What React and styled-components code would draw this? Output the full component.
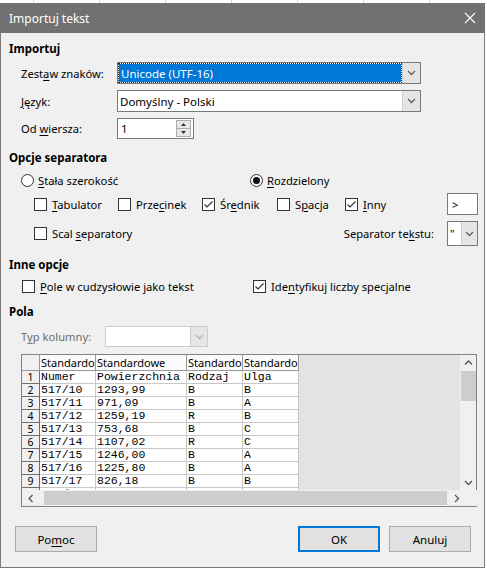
import React from 'react'
import styled, { createGlobalStyle } from 'styled-components'

const GlobalStyle = createGlobalStyle`
  html, body { margin: 0; padding: 0; background: #fff; }
  body {
    font-family: "Noto Sans", "Liberation Sans", sans-serif;
    font-size: 11.2px;
    color: #000;
  }
`

const Screen = styled.div`
  width: 487px;
  height: 568px;
  overflow: hidden;
  box-sizing: border-box;
  padding-top: 3px;
  background-color: #fff;
  background-image: linear-gradient(to right, #d4d4d4 1px, transparent 1px);
  background-size: 66px 100%;
  background-position: 33px 0;
`

const Window = styled.div`
  width: 485px;
  height: 565px;
  box-sizing: border-box;
  display: flex;
  flex-direction: column;
  background: #f0f0f0;
  border: 1px solid #7a7a7a;
  border-top: none;
`

const TitleBar = styled.div`
  flex: none;
  height: 30px;
  margin: 0 -1px;
  padding: 0 9px;
  background: #717171;
  color: #fff;
  display: flex;
  align-items: center;
  justify-content: space-between;
  font-size: 12px;
`

const Body = styled.div`
  flex: 1;
  display: flex;
  flex-direction: column;
  padding: 8px 6px 0 8px;
`

const Heading = styled.div`
  height: 16px;
  line-height: 16px;
  margin-top: ${p => p.$top || 0}px;
  font-weight: 700;
  font-size: 11.5px;
`

const Row = styled.div`
  display: flex;
  align-items: center;
  height: ${p => p.$h}px;
  margin-top: ${p => p.$top}px;
  padding-left: ${p => p.$indent}px;
`

const Label = styled.span`
  width: ${p => p.$w ? p.$w + 'px' : 'auto'};
  flex: none;
  white-space: nowrap;
  color: ${p => p.$disabled ? '#6d6d6d' : '#000'};
`

const U = styled.span`
  text-decoration: underline;
  text-underline-offset: 2px;
`

const Combo = styled.div`
  width: ${p => p.$w}px;
  height: ${p => p.$h}px;
  margin-left: ${p => p.$left || 0}px;
  box-sizing: border-box;
  display: flex;
  background: #fff;
  border: 1px solid ${p => p.$disabled ? '#cccccc' : '#7a7a7a'};
`

const ComboValue = styled.div`
  flex: 1;
  display: flex;
  align-items: center;
  padding-left: 2px;
  margin: ${p => p.$selected ? '1px' : '0'};
  background: ${p => p.$selected ? '#0078d7' : 'transparent'};
  color: ${p => p.$selected ? '#fff' : '#000'};
  outline: ${p => p.$selected ? '1px dotted #222' : 'none'};
  font-size: 11.5px;
  white-space: nowrap;
  overflow: hidden;
`

const ComboButton = styled.div`
  width: ${p => p.$w || 17}px;
  flex: none;
  display: flex;
  align-items: center;
  justify-content: center;
  background: #e5e5e5;
  border-left: 1px solid #cfcfcf;
`

const Chevron = ({ color = '#606060', dir = 'down' }) => {
  const pts = {
    down: '1,1 4.5,4.5 8,1',
    up: '1,4.5 4.5,1 8,4.5',
    left: '4.5,1 1,4.5 4.5,8',
    right: '1,1 4.5,4.5 1,8',
  }[dir]
  const horiz = dir === 'left' || dir === 'right'
  return (
    <svg width={horiz ? 6 : 9} height={horiz ? 9 : 6} viewBox={horiz ? '0 0 6 9' : '0 0 9 6'}>
      <polyline points={pts} fill="none" stroke={color} strokeWidth="1.3" />
    </svg>
  )
}

const Spin = styled.div`
  width: 77px;
  height: 21px;
  box-sizing: border-box;
  border: 1px solid #7a7a7a;
  background: #fff;
  display: flex;
  align-items: center;
  padding: 0 2px 0 3px;
  font-size: 11.5px;
`

const SpinText = styled.span`
  flex: 1;
`

const SpinButtons = styled.div`
  width: 13px;
  height: 15px;
  display: flex;
  flex-direction: column;
  border: 1px solid #adadad;
  background: #e8e8e8;
`

const SpinHalf = styled.div`
  flex: 1;
  display: flex;
  align-items: center;
  justify-content: center;
  & + & { border-top: 1px solid #adadad; }
`

const Tri = ({ up }) => (
  <svg width="5" height="3" viewBox="0 0 5 3">
    <polygon points={up ? '0,3 2.5,0 5,3' : '0,0 5,0 2.5,3'} fill="#333" />
  </svg>
)

const Option = styled.label`
  display: flex;
  align-items: center;
  gap: ${p => p.$gap || 5}px;
  width: ${p => p.$w ? p.$w + 'px' : 'auto'};
  flex: none;
  white-space: nowrap;
`

const Box = styled.span`
  width: 13px;
  height: 13px;
  box-sizing: border-box;
  flex: none;
  border: 1px solid #333;
  background: #fff;
  display: flex;
  align-items: center;
  justify-content: center;
`

const Circle = styled(Box)`
  border-radius: 50%;
`

const Dot = styled.span`
  width: 7px;
  height: 7px;
  border-radius: 50%;
  background: #111;
`

const Check = ({ on }) => (
  <Box>
    {on && (
      <svg width="11" height="11" viewBox="0 0 11 11">
        <polyline points="1.5,5.5 4,8 9.5,2.5" fill="none" stroke="#333" strokeWidth="1.2" />
      </svg>
    )}
  </Box>
)

const Radio = ({ on }) => <Circle>{on && <Dot />}</Circle>

const Spacer = styled.div`
  flex: 1;
`

const SmallInput = styled.div`
  width: 31px;
  height: ${p => p.$h}px;
  box-sizing: border-box;
  border: 1px solid #7a7a7a;
  background: #fff;
  display: flex;
  align-items: center;
  padding-left: 4px;
  font-size: 11px;
`

const TableBox = styled.div`
  margin: 7px 0 0 12px;
  width: 456px;
  height: 153px;
  box-sizing: border-box;
  border: 1px solid #828282;
  display: grid;
  grid-template-columns: 1fr 17px;
  grid-template-rows: 1fr 16px;
  background: #f0f0f0;
`

const GridArea = styled.div`
  background: #e3e3e3;
  overflow: hidden;
`

const Table = styled.div`
  display: grid;
  grid-template-columns: 18px 56px 91px 56px 56px;
  grid-auto-rows: 13px;
  grid-template-rows: 16px;
  width: 277px;
`

const HeadCell = styled.div`
  background: ${p => p.$corner ? '#f0f0f0' : '#fbfbfb'};
  border-right: 1px solid #9a9a9a;
  border-bottom: 1px solid #9a9a9a;
  padding-left: 1px;
  line-height: 15px;
  font-size: 11px;
  white-space: nowrap;
  overflow: hidden;
`

const NumCell = styled.div`
  background: #f0f0f0;
  border-right: 1px solid #6e6e6e;
  border-bottom: 1px solid #6e6e6e;
  box-sizing: border-box;
  text-align: center;
  font-size: 10.5px;
  line-height: 12px;
  overflow: hidden;
`

const Cell = styled.div`
  background: #fff;
  border-right: 1px solid #c8c8c8;
  border-bottom: 1px solid #c8c8c8;
  box-sizing: border-box;
  font-family: "Liberation Mono", monospace;
  font-size: 11.5px;
  line-height: 12px;
  padding-left: 1px;
  white-space: nowrap;
  overflow: hidden;
`

const VScroll = styled.div`
  display: flex;
  flex-direction: column;
  align-items: center;
  padding: 5px 0 4px;
`

const VThumb = styled.div`
  width: 15px;
  height: 30px;
  margin-top: 5px;
  background: #cdcdcd;
`

const HScroll = styled.div`
  display: flex;
  align-items: center;
  padding-left: 6px;
`

const HThumb = styled.div`
  width: 403px;
  height: 14px;
  margin: 0 7px 0 10px;
  background: #cdcdcd;
`

const Corner = styled.div`
  background: #f0f0f0;
`

const Buttons = styled.div`
  display: flex;
  align-items: center;
  margin-top: 19px;
  padding: 0 7px 0 6px;
  gap: 9px;
`

const Button = styled.button`
  width: 82px;
  height: 26px;
  box-sizing: border-box;
  background: #e1e1e1;
  border: ${p => p.$default ? '2px solid #0078d7' : '1px solid #adadad'};
  font-family: inherit;
  font-size: 11.5px;
  color: #000;
  padding: 0;
`

const rows = [
  ['Numer', 'Powierzchnia', 'Rodzaj', 'Ulga'],
  ['517/10', '1293,99', 'B', 'B'],
  ['517/11', '971,09', 'B', 'A'],
  ['517/12', '1259,19', 'R', 'B'],
  ['517/13', '753,68', 'B', 'C'],
  ['517/14', '1107,02', 'R', 'C'],
  ['517/15', '1246,00', 'B', 'A'],
  ['517/16', '1225,80', 'B', 'A'],
  ['517/17', '826,18', 'B', 'B'],
  ['517/18', '1144,57', 'B', 'A'],
]

export default function App() {
  return (
    <>
      <GlobalStyle />
      <Screen>
        <Window>
          <TitleBar>
            <span>Importuj tekst</span>
            <svg width="12" height="12" viewBox="0 0 12 12">
              <path d="M1 1 L11 11 M11 1 L1 11" stroke="#fff" strokeWidth="1.1" />
            </svg>
          </TitleBar>
          <Body>
            <Heading>Importuj</Heading>
            <Row $h={22} $top={5} $indent={12}>
              <Label $w={96}>Zest<U>a</U>w znaków:</Label>
              <Combo $w={304} $h={22}>
                <ComboValue $selected>Unicode (UTF-16)</ComboValue>
                <ComboButton><Chevron /></ComboButton>
              </Combo>
            </Row>
            <Row $h={22} $top={6} $indent={12}>
              <Label $w={96}><U>J</U>ęzyk:</Label>
              <Combo $w={304} $h={22}>
                <ComboValue>Domyślny - Polski</ComboValue>
                <ComboButton><Chevron /></ComboButton>
              </Combo>
            </Row>
            <Row $h={21} $top={6} $indent={12}>
              <Label $w={96}>Od <U>w</U>iersza:</Label>
              <Spin>
                <SpinText>1</SpinText>
                <SpinButtons>
                  <SpinHalf><Tri up /></SpinHalf>
                  <SpinHalf><Tri /></SpinHalf>
                </SpinButtons>
              </Spin>
            </Row>

            <Heading $top={11}>Opcje separatora</Heading>
            <Row $h={16} $top={6} $indent={12}>
              <Option $w={229} $gap={4}><Radio /><span><U>S</U>tała szerokość</span></Option>
              <Option $gap={4}><Radio on /><span><U>R</U>ozdzielony</span></Option>
            </Row>
            <Row $h={22} $top={5} $indent={25}>
              <Option $w={84}><Check /><span><U>T</U>abulator</span></Option>
              <Option $w={84}><Check /><span>Prze<U>c</U>inek</span></Option>
              <Option $w={75}><Check on /><span>Śr<U>e</U>dnik</span></Option>
              <Option $w={68}><Check /><span>S<U>p</U>acja</span></Option>
              <Option><Check on /><span><U>I</U>nny</span></Option>
              <Spacer />
              <SmallInput $h={22}>&gt;</SmallInput>
            </Row>
            <Row $h={25} $top={6} $indent={25}>
              <Option><Check /><span>Scal <U>s</U>eparatory</span></Option>
              <Spacer />
              <Label>Separator te<U>k</U>stu:</Label>
              <Combo $w={31} $h={25} $left={13}>
                <ComboValue>"</ComboValue>
                <ComboButton $w={15}><Chevron /></ComboButton>
              </Combo>
            </Row>

            <Heading $top={11}>Inne opcje</Heading>
            <Row $h={16} $top={5} $indent={13}>
              <Option $w={231}><Check /><span><U>P</U>ole w cudzysłowie jako tekst</span></Option>
              <Option><Check on /><span>Ide<U>n</U>tyfikuj liczby specjalne</span></Option>
            </Row>

            <Heading $top={10}>Pola</Heading>
            <Row $h={21} $top={6} $indent={12}>
              <Label $w={84} $disabled>T<U>y</U>p kolumny:</Label>
              <Combo $w={103} $h={21} $disabled>
                <ComboValue />
                <ComboButton $w={16}><Chevron color="#b5b5b5" /></ComboButton>
              </Combo>
            </Row>

            <TableBox>
              <GridArea>
                <Table>
                  <HeadCell $corner />
                  <HeadCell>Standardo</HeadCell>
                  <HeadCell>Standardowe</HeadCell>
                  <HeadCell>Standardo</HeadCell>
                  <HeadCell>Standardo</HeadCell>
                  {rows.map((r, i) => (
                    <React.Fragment key={i}>
                      <NumCell>{i + 1}</NumCell>
                      {r.map((c, j) => <Cell key={j}>{c}</Cell>)}
                    </React.Fragment>
                  ))}
                </Table>
              </GridArea>
              <VScroll>
                <Chevron dir="up" color="#555" />
                <VThumb />
                <Spacer />
                <Chevron color="#555" />
              </VScroll>
              <HScroll>
                <Chevron dir="left" color="#555" />
                <HThumb />
                <Chevron dir="right" color="#555" />
              </HScroll>
              <Corner />
            </TableBox>

            <Buttons>
              <Button>Po<U>m</U>oc</Button>
              <Spacer />
              <Button $default>OK</Button>
              <Button>Anuluj</Button>
            </Buttons>
          </Body>
        </Window>
      </Screen>
    </>
  )
}
